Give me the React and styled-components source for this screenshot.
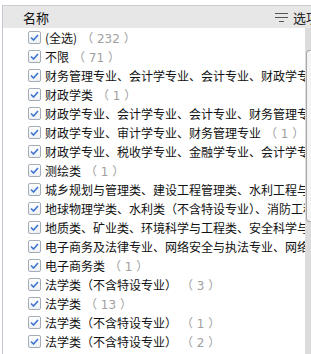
import React from 'react'
import styled, { createGlobalStyle } from 'styled-components'

const items = [
    { name: '(全选)', count: 232 },
    { name: '不限', count: 71 },
    { name: '财务管理专业、会计学专业、会计专业、财政学专业', count: 1 },
    { name: '财政学类', count: 1 },
    { name: '财政学专业、会计学专业、会计专业、财务管理专业', count: 1 },
    { name: '财政学专业、审计学专业、财务管理专业', count: 1 },
    { name: '财政学专业、税收学专业、金融学专业、会计学专业', count: 1 },
    { name: '测绘类', count: 1 },
    { name: '城乡规划与管理类、建设工程管理类、水利工程与管理类', count: 1 },
    { name: '地球物理学类、水利类（不含特设专业）、消防工程', count: 1 },
    { name: '地质类、矿业类、环境科学与工程类、安全科学与工程类', count: 1 },
    { name: '电子商务及法律专业、网络安全与执法专业、网络', count: 1 },
    { name: '电子商务类', count: 1 },
    { name: '法学类（不含特设专业）', count: 3 },
    { name: '法学类', count: 13 },
    { name: '法学类（不含特设专业）', count: 1 },
    { name: '法学类（不含特设专业）', count: 2 },
]

const Global = createGlobalStyle`
    html, body {
        margin: 0;
        padding: 0;
        background: #ffffff;
        overflow: hidden;
    }
    body {
        font-family: "Noto Sans CJK SC", "Liberation Sans", sans-serif;
    }
`

function CheckMark() {
    return (
        <svg width="9" height="7" viewBox="0 0 9 7">
            <path d="M1 3.5 L3.5 6 L8 1" fill="none" stroke="#3d74d1" strokeWidth="1.6" />
        </svg>
    )
}

function OptionIcon() {
    return (
        <svg width="13" height="11" viewBox="0 0 13 11">
            <path d="M0 1.5 H13 M0 5.5 H13 M4 9.5 H9" stroke="#555" strokeWidth="1" />
        </svg>
    )
}

class App extends React.Component {
    render() {
        return (
            <Page>
                <Global />
                <Panel>
                    <Header>
                        <Title>名称</Title>
                        <Option>
                            <OptionIcon />
                            <span>选项</span>
                        </Option>
                    </Header>
                    <Body>
                        <List>
                            {items.map((item, i) => (
                                <Row key={i}>
                                    <Check><CheckMark /></Check>
                                    <Name>{item.name}</Name>
                                    <Count>（ {item.count} ）</Count>
                                </Row>
                            ))}
                        </List>
                        <Track>
                            <Thumb />
                        </Track>
                    </Body>
                </Panel>
            </Page>
        )
    }
}

const Page = styled.div`
    width: 311px;
    height: 354px;
    padding: 5px 0 0 2px;
    box-sizing: border-box;
    overflow: hidden;
`

const Panel = styled.div`
    height: 100%;
    border-top: 1px solid #c9cdd4;
    border-left: 1px solid #c2c8d2;
    display: flex;
    flex-direction: column;
    overflow: hidden;
`

const Header = styled.div`
    height: 22px;
    flex: none;
    background: #e7e7e7;
    display: flex;
    align-items: center;
    justify-content: space-between;
    padding-left: 20px;
    white-space: nowrap;
    overflow: hidden;
`

const Title = styled.span`
    font-size: 13px;
    color: #111;
`

const Option = styled.span`
    display: flex;
    align-items: center;
    gap: 5px;
    font-size: 13px;
    color: #222;
    margin-right: -8px;
`

const Body = styled.div`
    flex: 1;
    display: flex;
    overflow: hidden;
`

const List = styled.div`
    flex: 1;
    min-width: 0;
    overflow: hidden;
    padding-left: 25px;
`

const Row = styled.div`
    height: 19px;
    display: flex;
    align-items: center;
    white-space: nowrap;
    font-size: 12px;
`

const Check = styled.span`
    flex: none;
    width: 13px;
    height: 13px;
    box-sizing: border-box;
    border: 1px solid #a4acb6;
    border-radius: 2px;
    background: linear-gradient(#ffffff, #eef1f5);
    display: flex;
    align-items: center;
    justify-content: center;
    margin-right: 4px;
`

const Name = styled.span`
    color: #111;
    flex: none;
`

const Count = styled.span`
    color: #a0a0a0;
    margin-left: 4px;
    font-family: "DejaVu Sans", "Noto Sans CJK SC", sans-serif;
    font-size: 12px;
    flex: none;
`

const Track = styled.div`
    flex: none;
    width: 6px;
    background: #dcdcdc;
    padding-top: 22px;
    box-sizing: border-box;
`

const Thumb = styled.div`
    height: 170px;
    margin-left: 1px;
    background: #f4f4f4;
    border: 1px solid #a8a8a8;
    border-right: none;
    border-radius: 4px 0 0 4px;
`

export default App
